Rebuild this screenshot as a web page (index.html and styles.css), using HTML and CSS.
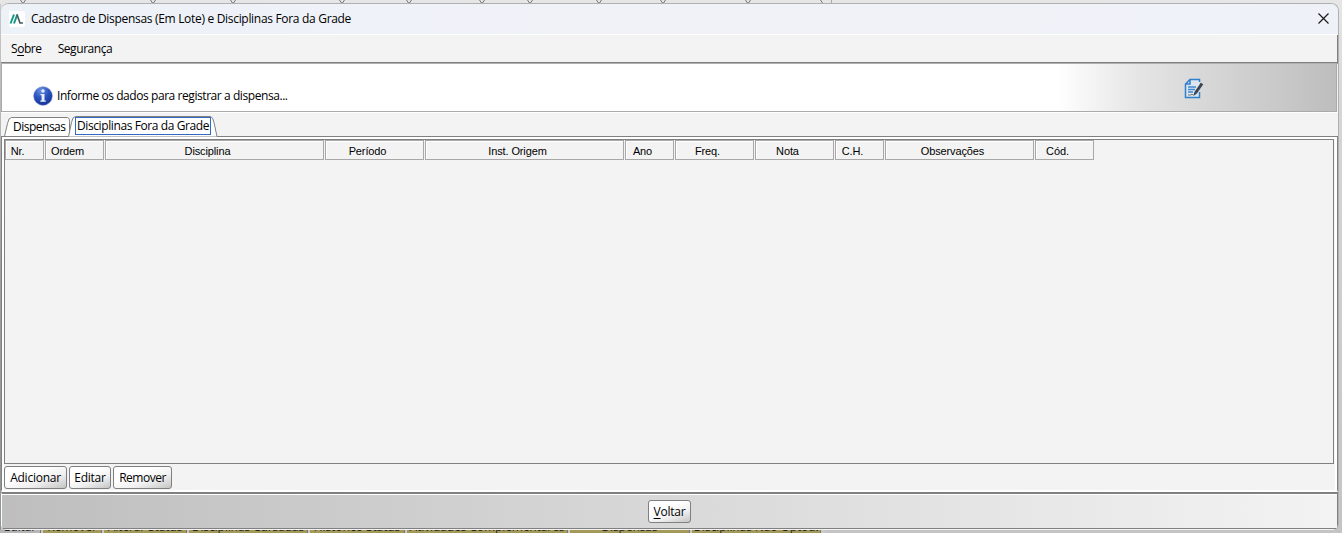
FILE: index.html
```html
<!doctype html>
<html lang="pt-BR">
  <head>
    <meta charset="UTF-8" />
    <title>Cadastro de Dispensas (Em Lote) e Disciplinas Fora da Grade</title>
    <link rel="stylesheet" href="styles.css">
  </head>
  <body>
    <!-- Janela de fundo -->
    <div class="backdrop">
      <svg class="backdrop-top" width="832" height="4" fill="none" stroke="#777">
        <path d="M20.500 0l2 3h1l2-3M150.500 0l2 3h1l2-3M230.500 0l2 3h1l2-3M339.500 0l2 3h1l2-3M406.500 0l2 3h1l2-3M479.500 0l2 3h1l2-3M527.500 0l2 3h1l2-3M596.500 0l2 3h1l2-3M660.500 0l2 3h1l2-3M745.500 0l2 3h1l2-3M820.500 0l2 3"/>
        <path d="M831.500 0v4" stroke="#aaa"/>
      </svg>
      <div class="backdrop-tabs">
        <span class="plain"><b>Editar</b></span>
        <span><b>Remover</b></span>
        <span><b>Alterar Status</b></span>
        <span><b><u>D</u>isciplinas Cursadas</b></span>
        <span><b>Histórico Status</b></span>
        <span><b>Atividades Complementares</b></span>
        <span><b>Dispensas</b></span>
        <span><b>Disciplinas Não Optou.</b></span>
      </div>
    </div>

    <div class="window">
      <header class="titlebar">
        <svg class="app-icon" width="16" height="16" viewBox="0 0 16 16">
          <rect width="16" height="16" rx="2" fill="#fff"/>
          <path d="M1.500 12.500L5 3.500M5 12.500L8.300 3.500" stroke="#159a85" stroke-width="2" fill="none"/>
          <path d="M8 3.500L11 12H14" stroke="#4a5a5c" stroke-width="1.700" fill="none"/>
        </svg>
        <h1>Cadastro de Dispensas (Em Lote) e Disciplinas Fora da Grade</h1>
        <svg class="close" width="11" height="11" viewBox="0 0 11 11">
          <path d="M.5.5l10 10M10.500.5l-10 10" stroke="#1a1a1a" stroke-width="1.200"/>
        </svg>
      </header>

      <nav class="menu">
        <span>S<u>o</u>bre</span>
        <span>Segurança</span>
      </nav>

      <section class="banner">
        <svg class="info" width="20" height="20" viewBox="0 0 20 20">
          <defs>
            <radialGradient id="blue" cx=".4" cy=".2" r=".8">
              <stop offset="0" stop-color="#6d93e6"/>
              <stop offset=".5" stop-color="#2a55bf"/>
              <stop offset="1" stop-color="#16339a"/>
            </radialGradient>
          </defs>
          <circle cx="10" cy="10" r="9.300" fill="url(#blue)" stroke="#6a7fb8" stroke-width=".6"/>
          <circle cx="10" cy="5" r="1.700" fill="#e8eefc"/>
          <path d="M7.500 8h4v6.500h1.300v1.300H7.300v-1.300h1.300V9.300H7.500z" fill="#e8eefc"/>
        </svg>
        <p>Informe os dados para registrar a dispensa...</p>
        <svg class="edit" width="20" height="22" viewBox="0 0 20 22" fill="none">
          <path d="M6 1.500H15.500V19.500H1.500V6z" fill="#dde6ef"/>
          <path d="M15.500 4V1.500H6L1.500 6V19.500H15.500V14M6 1.500V6H1.500" stroke="#2f7fcd" stroke-width="1.500"/>
          <path d="M4 9h8M4 11.500h7M4 14h5" stroke="#3d8ad2" stroke-width="1.300"/>
          <path d="M4 17h3l1-1 1 1h1" stroke="#777" stroke-width="1"/>
          <path d="M18 5.500L11.500 15" stroke="#3b4352" stroke-width="3"/>
          <path d="M10.300 14.100l2.400 1.700-3 2z" fill="#3b4352"/>
        </svg>
      </section>

      <div class="tabs">
        <svg class="tab-shapes" width="220" height="22" fill="none" stroke="#808080">
          <path d="M3.500 20.500L6.500 7.500Q7.500 1.500 10.500 1.500H66.500Q69 2 68.500 8V20.500z" fill="#fff"/>
          <path d="M67.500 20.500L70.500 6.500Q71.500.5 74.500.5H209.500Q212 1 213 6.500L216 20.500" fill="#fff"/>
        </svg>
        <span class="tab">Dispensas</span>
        <span class="tab tab-active">Disciplinas Fora da Grade</span>
      </div>

      <main class="panel">
        <div class="grid">
          <div class="grid-head">
            <span>Nr.</span>
            <span>Ordem</span>
            <span>Disciplina</span>
            <span>Período</span>
            <span>Inst. Origem</span>
            <span>Ano</span>
            <span>Freq.</span>
            <span>Nota</span>
            <span>C.H.</span>
            <span>Observações</span>
            <span>Cód.</span>
          </div>
        </div>
        <div class="actions">
          <button class="btn-add">Adicionar</button>
          <button class="btn-edit">Editar</button>
          <button class="btn-remove">Remover</button>
        </div>
      </main>

      <footer class="footer">
        <button class="btn-back"><u>V</u>oltar</button>
      </footer>
    </div>
  </body>
</html>
```
FILE: styles.css
```css
* {
  margin: 0;
  padding: 0;
  box-sizing: border-box;
}

body {
  width: 1342px;
  height: 533px;
  overflow: hidden;
  position: relative;
  padding: 3px 0 0 1px;
  font-family: 'Open Sans', 'Noto Sans', sans-serif;
  font-size: 12px;
  line-height: 16px;
  letter-spacing: -0.43px;
  color: #000;
  background: linear-gradient(#e6e6e6, #d6d6d6 20%, #c4c4c4);
}

u {
  text-underline-offset: 2px;
  text-decoration-thickness: 1px;
}

/* Janela de fundo */
.backdrop {
  position: absolute;
  inset: 0;
}

.backdrop-top {
  display: block;
}

.backdrop::before {
  content: '';
  position: absolute;
  top: 4px;
  left: 0;
  width: 1px;
  height: 529px;
  background: linear-gradient(#c8c8c8, #a0a0a0 50%, #8d9796);
}

.backdrop-tabs {
  position: absolute;
  left: 0;
  bottom: 0;
  width: 825px;
  height: 3px;
  display: grid;
  grid-template-columns: 41px 59px 83px 119px 95px 161px 120px 129px;
  column-gap: 2px;
  background: #c9c9c9;
  overflow: hidden;
  letter-spacing: -0.1px;
}

.backdrop-tabs span {
  height: 3px;
  overflow: hidden;
  text-align: center;
  white-space: nowrap;
  background: #a39a5a;
  border-right: 1px solid #777;
}

.backdrop-tabs .plain {
  background: #b5b5b5;
}

.backdrop-tabs b {
  display: block;
  margin-top: -11px;
  font-weight: 400;
  color: #222;
}

/* Janela principal */
.window {
  position: relative;
  width: 1338px;
  height: 527px;
  display: flex;
  flex-direction: column;
  background: #f3f3f3;
  border-top: 1px solid #b0b0b0;
  border-right: 1px solid #b0b0b0;
  border-radius: 8px 8px 6px 6px;
  overflow: hidden;
}

.titlebar {
  height: 31px;
  flex: none;
  display: flex;
  align-items: center;
  padding: 0 9px 1px 8px;
  background: linear-gradient(100deg, #edf2f8, #f1f2f8 60%, #eef2f8);
  border-bottom: 1px solid #fff;
}

.titlebar h1 {
  flex: 1;
  margin: 1px 0 0 6px;
  font-size: 12px;
  font-weight: 400;
  letter-spacing: -0.31px;
}

.menu {
  height: 29px;
  flex: none;
  display: flex;
  gap: 16px;
  padding: 6px 0 0 10px;
  border-right: 1px solid #808080;
  border-bottom: 1px solid #b0b0b0;
  box-shadow: inset 0 -1px #808080;
}

.banner {
  height: 48px;
  flex: none;
  display: flex;
  padding: 0 132px 0 31px;
  background: linear-gradient(90deg, #fff 1055px, #e4e4e4 1140px, #bdbdbd 1336px);
  border: 1px solid #aaa;
  border-top: 0;
  margin-right: 1px;
}

.banner .info {
  margin-top: 22px;
}

.banner p {
  flex: 1;
  margin: 24px 0 0 4px;
}

.banner .edit {
  margin-top: 14px;
}

.tabs {
  position: relative;
  height: 25px;
  flex: none;
  display: flex;
  padding: 4px 0 0 12px;
  border-top: 1px solid #fff;
  border-bottom: 1px solid #808080;
}

.tab-shapes {
  position: absolute;
  left: 0;
  top: 3px;
}

.tab {
  position: relative;
  width: 62px;
  padding-top: 2px;
  letter-spacing: -0.5px;
  white-space: nowrap;
}

.tab-active {
  width: 136px;
  height: 18px;
  padding: 0 0 0 1px;
  border: 1px solid #316ac5;
  letter-spacing: -0.4px;
}

.panel {
  height: 355px;
  flex: none;
  padding: 2px 3px 0;
  border-left: 1px solid #808080;
  border-right: 1px solid #808080;
  border-bottom: 2px solid #fff;
  box-shadow: inset 2px 0 #fff, inset -2px 0 #fff, inset 0 2px #fff;
}

.grid {
  height: 325px;
  margin-left: -1px;
  border: 1px solid #808080;
}

.grid-head {
  display: grid;
  grid-template-columns: 39px 60px 220px 100px 200px 50px 80px 80px 50px 150px 60px;
  width: max-content;
  height: 20px;
  font: 11px/21px 'Liberation Sans', Arial, sans-serif;
  letter-spacing: -0.12px;
}

.grid-head span {
  height: 20px;
  padding-right: 14px;
  text-align: center;
  border: 1px solid #a8a8a8;
  box-shadow: inset 1px 1px #fff;
}

.grid-head span + span {
  margin-left: 1px;
}

.actions {
  display: flex;
  gap: 2px;
  padding-top: 2px;
  margin-left: -1px;
}

button {
  height: 23px;
  padding-top: 1px;
  font: inherit;
  letter-spacing: -0.25px;
  color: #000;
  white-space: nowrap;
  border: 1px solid #808080;
  border-radius: 3px;
  background: linear-gradient(160deg, #fff 35%, #f0f0f0 65%, #c4c4c4);
}

.btn-add {
  width: 63px;
}

.btn-edit {
  width: 42px;
}

.btn-remove {
  width: 59px;
  letter-spacing: -0.5px;
}

.btn-back {
  width: 43px;
}

.footer {
  height: 37px;
  flex: none;
  padding-top: 6px;
  text-align: center;
  background: linear-gradient(90deg, #bebebe, #f3f3f3);
  border-top: 2px solid #808080;
  border-right: 1px solid #808080;
  border-bottom: 1px solid #808080;
  border-left: 1px solid #fff;
  box-shadow: inset 0 1px #fff;
}
```
